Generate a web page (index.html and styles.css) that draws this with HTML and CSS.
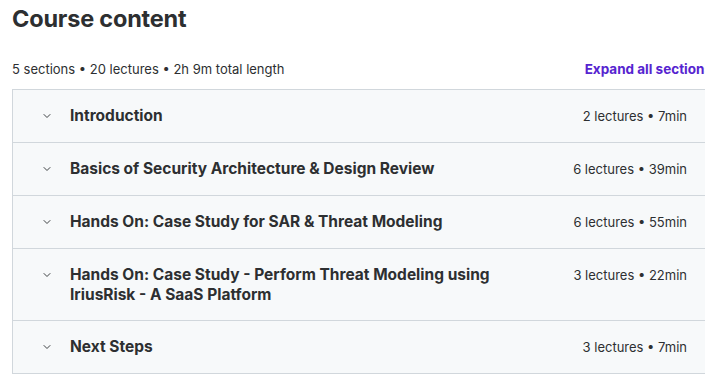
FILE: index.html
```html
<!DOCTYPE html>
<html>
<head>
<meta charset="utf-8">
<link rel="stylesheet" href="styles.css">
</head>
<body>
<div class="page">
  <h2 class="heading">Course content</h2>
  <div class="meta">
    <span>5 sections • 20 lectures • 2h 9m total length</span>
    <button class="expand">Expand all sections</button>
  </div>
  <div class="sections">
    <div class="row">
      <svg class="chev" viewBox="0 0 24 24" width="14" height="14"><path d="M6 9l6 6 6-6" fill="none" stroke="currentColor" stroke-width="2" stroke-linecap="round" stroke-linejoin="round"/></svg>
      <span class="title">Introduction</span>
      <span class="info">2 lectures • 7min</span>
    </div>
    <div class="row">
      <svg class="chev" viewBox="0 0 24 24" width="14" height="14"><path d="M6 9l6 6 6-6" fill="none" stroke="currentColor" stroke-width="2" stroke-linecap="round" stroke-linejoin="round"/></svg>
      <span class="title">Basics of Security Architecture &amp; Design Review</span>
      <span class="info">6 lectures • 39min</span>
    </div>
    <div class="row">
      <svg class="chev" viewBox="0 0 24 24" width="14" height="14"><path d="M6 9l6 6 6-6" fill="none" stroke="currentColor" stroke-width="2" stroke-linecap="round" stroke-linejoin="round"/></svg>
      <span class="title">Hands On: Case Study for SAR &amp; Threat Modeling</span>
      <span class="info">6 lectures • 55min</span>
    </div>
    <div class="row">
      <svg class="chev" viewBox="0 0 24 24" width="14" height="14"><path d="M6 9l6 6 6-6" fill="none" stroke="currentColor" stroke-width="2" stroke-linecap="round" stroke-linejoin="round"/></svg>
      <span class="title">Hands On: Case Study - Perform Threat Modeling using IriusRisk - A SaaS Platform</span>
      <span class="info">3 lectures • 22min</span>
    </div>
    <div class="row">
      <svg class="chev" viewBox="0 0 24 24" width="14" height="14"><path d="M6 9l6 6 6-6" fill="none" stroke="currentColor" stroke-width="2" stroke-linecap="round" stroke-linejoin="round"/></svg>
      <span class="title">Next Steps</span>
      <span class="info">3 lectures • 7min</span>
    </div>
  </div>
</div>
</body>
</html>
```
FILE: styles.css
```css
html, body {
  margin: 0;
  padding: 0;
  background: #fff;
  overflow: hidden;
}
body {
  font-family: Inter, "Noto Sans", sans-serif;
  color: #2d2f31;
}
.page {
  width: 700px;
  padding-left: 12px;
}
.heading {
  margin: 0;
  padding-top: 4px;
  font-size: 23.5px;
  line-height: 30px;
  font-weight: 700;
  letter-spacing: -0.2px;
}
.meta {
  display: flex;
  justify-content: space-between;
  align-items: center;
  margin-top: 25px;
  height: 20px;
  font-size: 13px;
}
.expand {
  border: 0;
  background: none;
  padding: 0;
  font-family: inherit;
  font-size: 13.5px;
  font-weight: 700;
  color: #5624d0;
}
.sections {
  margin-top: 10px;
  border: 1px solid #d1d7dc;
  border-bottom: 0;
}
.row {
  display: flex;
  align-items: flex-start;
  background: #f7f9fa;
  padding: 16px 24px 16px 28px;
  border-bottom: 1px solid #d1d7dc;
  line-height: 20px;
}
.chev {
  flex: none;
  margin-top: 4px;
  width: 12px;
  height: 12px;
  color: #3e4143;
}
.title {
  flex: 1;
  margin-left: 17px;
  font-size: 15.5px;
  line-height: 19.5px;
  font-weight: 700;
  padding-right: 80px;
}
.info {
  flex: none;
  font-size: 13px;
  white-space: nowrap;
}
```
